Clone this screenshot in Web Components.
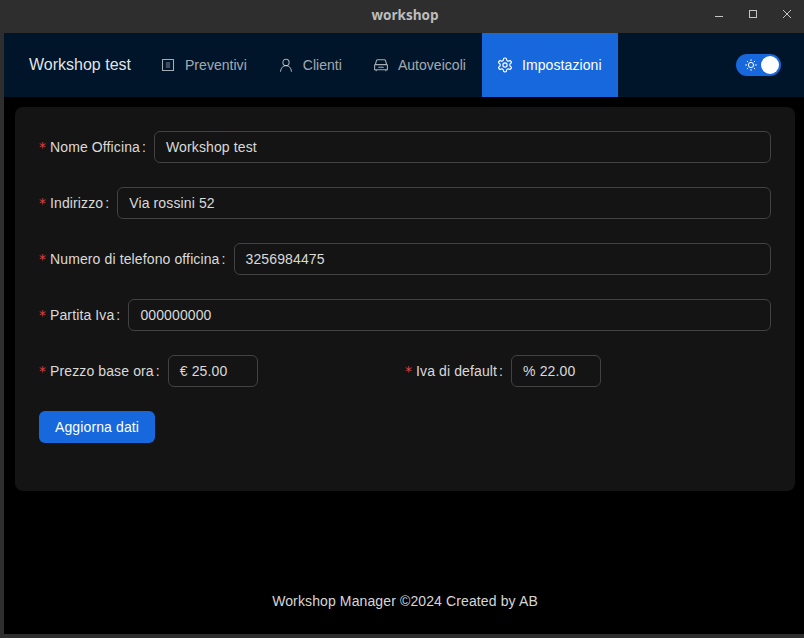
<!DOCTYPE html>
<html lang="it"><head><meta charset="utf-8"><title>workshop</title>
<style>
html,body{margin:0;height:100%;background:#2e2e2e}
body{font-family:"Liberation Sans",Arial,sans-serif;font-size:14px;overflow:hidden;letter-spacing:.12px}
</style></head>
<body>
<wb-window>
  <wb-titlebar slot="title">workshop</wb-titlebar>
  <wb-nav slot="nav" brand="Workshop test">
    <wb-nav-item icon="profile">Preventivi</wb-nav-item>
    <wb-nav-item icon="user">Clienti</wb-nav-item>
    <wb-nav-item icon="car">Autoveicoli</wb-nav-item>
    <wb-nav-item icon="gear" active>Impostazioni</wb-nav-item>
    <wb-toggle slot="end"></wb-toggle>
  </wb-nav>
  <wb-card>
    <wb-field label="Nome Officina" value="Workshop test"></wb-field>
    <wb-field label="Indirizzo" value="Via rossini 52"></wb-field>
    <wb-field label="Numero di telefono officina" value="3256984475"></wb-field>
    <wb-field label="Partita Iva" value="000000000"></wb-field>
    <wb-field-row>
      <wb-field label="Prezzo base ora" value="€ 25.00" narrow></wb-field>
      <wb-field label="Iva di default" value="% 22.00" narrow></wb-field>
    </wb-field-row>
    <wb-button>Aggiorna dati</wb-button>
  </wb-card>
  <wb-footer slot="footer">Workshop Manager ©2024 Created by AB</wb-footer>
</wb-window>
<script>
const ICONS={
profile:'<rect x="1.5" y="1.5" width="11" height="11" stroke-width="1.1"/><path d="M4.8 5h4.4M4.8 7h4.4M4.8 9h4.4" stroke-width="1" stroke-linecap="butt" opacity=".75"/>',
user:'<circle cx="7" cy="4.4" r="3.1" stroke-width="1.1"/><path d="M1.6 13.2c.2-3.2 2.5-5.4 5.4-5.4s5.2 2.2 5.4 5.4" stroke-width="1.1"/>',
car:'<path d="M1.3 6.6l1.2-3.9c.2-.6.6-.9 1.2-.9h6.6c.6 0 1 .3 1.2.9l1.2 3.9M1.2 6.6h11.6c.4 0 .6.3.6.6v4.5H.6V7.2c0-.3.2-.6.6-.6zM2.2 11.7v1.1M11.8 11.7v1.1M4.7 9.3h4.6" stroke-width="1.1"/>',
gear:'<g transform="translate(-1.4 -1.4) scale(.7)"><path stroke-width="1.7" d="M12.22 2h-.44a2 2 0 0 0-2 2v.18a2 2 0 0 1-1 1.73l-.43.25a2 2 0 0 1-2 0l-.15-.08a2 2 0 0 0-2.73.73l-.22.38a2 2 0 0 0 .73 2.73l.15.1a2 2 0 0 1 1 1.72v.51a2 2 0 0 1-1 1.74l-.15.09a2 2 0 0 0-.73 2.73l.22.38a2 2 0 0 0 2.73.73l.15-.08a2 2 0 0 1 2 0l.43.25a2 2 0 0 1 1 1.73V20a2 2 0 0 0 2 2h.44a2 2 0 0 0 2-2v-.18a2 2 0 0 1 1-1.73l.43-.25a2 2 0 0 1 2 0l.15.08a2 2 0 0 0 2.73-.73l.22-.39a2 2 0 0 0-.73-2.73l-.15-.08a2 2 0 0 1-1-1.74v-.5a2 2 0 0 1 1-1.74l.15-.09a2 2 0 0 0 .73-2.73l-.22-.38a2 2 0 0 0-2.73-.73l-.15.08a2 2 0 0 1-2 0l-.43-.25a2 2 0 0 1-1-1.73V4a2 2 0 0 0-2-2z"/><circle cx="12" cy="12" r="3" stroke-width="1.7"/></g>'
};
function def(name,css,html){
  customElements.define(name,class extends HTMLElement{
    constructor(){super();this.attachShadow({mode:'open'});}
    connectedCallback(){
      const h=typeof html==='function'?html(this):html;
      this.shadowRoot.innerHTML='<style>'+css+'</style>'+h;
    }
  });
}
def('wb-window',`:host{display:flex;flex-direction:column;height:638px;width:804px;box-sizing:border-box;background:#2e2e2e;overflow:hidden;border-radius:9px 9px 0 0}
.app{flex:1;display:flex;flex-direction:column;margin:0 0 4px 4px;background:#000;min-height:0}
main{padding:10px 9px 0 11px;flex:1;min-height:0}`,
`<slot name="title"></slot><div class="app"><slot name="nav"></slot><main><slot></slot></main><slot name="footer"></slot></div>`);
def('wb-titlebar',`:host{display:flex;align-items:center;justify-content:center;height:33px;flex:none;background:#2e2e2e;color:#bdbdbd;font:700 13.5px "Open Sans","Noto Sans",sans-serif;letter-spacing:0;position:relative}
.title{margin-left:6px;margin-top:-3px}
.ctl{position:absolute;left:711px;top:6px;display:flex;gap:18px}
svg{display:block;width:16px;height:16px;fill:none;stroke:#c4c4c4;stroke-width:1}`,
`<span class="title"><slot></slot></span><div class="ctl">
<svg viewBox="0 0 16 16"><path d="M4 10.5h8"/></svg>
<svg viewBox="0 0 16 16"><rect x="4.5" y="4.5" width="7" height="7" /></svg>
<svg viewBox="0 0 16 16"><path d="M4 4l8 8M12 4l-8 8"/></svg></div>`);
def('wb-nav',`:host{display:flex;align-items:stretch;height:64px;flex:none;background:#001529;padding:0 23px 0 25px}
.brand{display:flex;align-items:center;color:rgba(255,255,255,.9);font-size:16px;letter-spacing:0;width:116px;flex:none}
.items{display:flex;flex:1}
.end{display:flex;align-items:center}`,
t=>`<div class="brand">${t.getAttribute('brand')}</div><div class="items"><slot></slot></div><div class="end"><slot name="end"></slot></div>`);
def('wb-nav-item',`:host{display:flex;align-items:center;gap:10px;padding:0 16px;color:rgba(255,255,255,.65);letter-spacing:.03px}
:host([active]){background:#1668dc;color:#fff;letter-spacing:.09px}
svg{width:14px;height:14px;flex:none;fill:none;stroke:currentColor;stroke-linecap:round;stroke-linejoin:round;overflow:visible}`,
t=>`<svg viewBox="0 0 14 14">${ICONS[t.getAttribute('icon')]}</svg><span><slot></slot></span>`);
def('wb-toggle',`:host{display:flex;align-items:center;width:45px;height:22px;border-radius:11px;background:#1668dc;box-sizing:border-box;padding:0 2px 0 9px;justify-content:space-between}
svg{width:12px;height:12px;fill:none;stroke:#fff;stroke-width:1;stroke-linecap:round}
.k{width:18px;height:18px;border-radius:50%;background:#fff}`,
`<svg viewBox="0 0 12 12"><circle cx="6" cy="6" r="2.6"/><path d="M6 .6v1M6 10.4v1M.6 6h1M10.4 6h1M2.2 2.2l.7.7M9.1 9.1l.7.7M9.8 2.2l-.7.7M2.9 9.1l-.7.7"/></svg><div class="k"></div>`);
def('wb-card',`:host{display:flex;flex-direction:column;gap:24px;background:#141414;border-radius:8px;padding:24px 24px 48px}`,`<slot></slot>`);
def('wb-field-row',`:host{display:grid;grid-template-columns:1fr 1fr}`,`<slot></slot>`);
def('wb-field',`:host{display:flex;align-items:center;height:32px;color:rgba(255,255,255,.85)}
.star{color:#dc4446;font:14px "DejaVu Sans",sans-serif;letter-spacing:0;width:7px;margin:0 4px 0 0;line-height:1}
.colon{margin:0 8px 0 2px}
.in{flex:1;box-sizing:border-box;height:32px;border:1px solid #424242;border-radius:6px;padding:0 11px;display:flex;align-items:center;background:#141414}
:host([narrow]) .in{flex:none;width:90px}`,
t=>`<span class="star">*</span><span>${t.getAttribute('label')}</span><span class="colon">:</span><div class="in">${t.getAttribute('value')}</div>`);
def('wb-button',`:host{display:block;align-self:flex-start;height:32px;line-height:32px;padding:0 16px;background:#1668dc;color:#fff;border-radius:6px}`,`<slot></slot>`);
def('wb-footer',`:host{display:block;flex:none;text-align:center;color:rgba(255,255,255,.85);padding:26px 49px 22px 51px;line-height:22px}`,`<slot></slot>`);
</script>
</body></html>
